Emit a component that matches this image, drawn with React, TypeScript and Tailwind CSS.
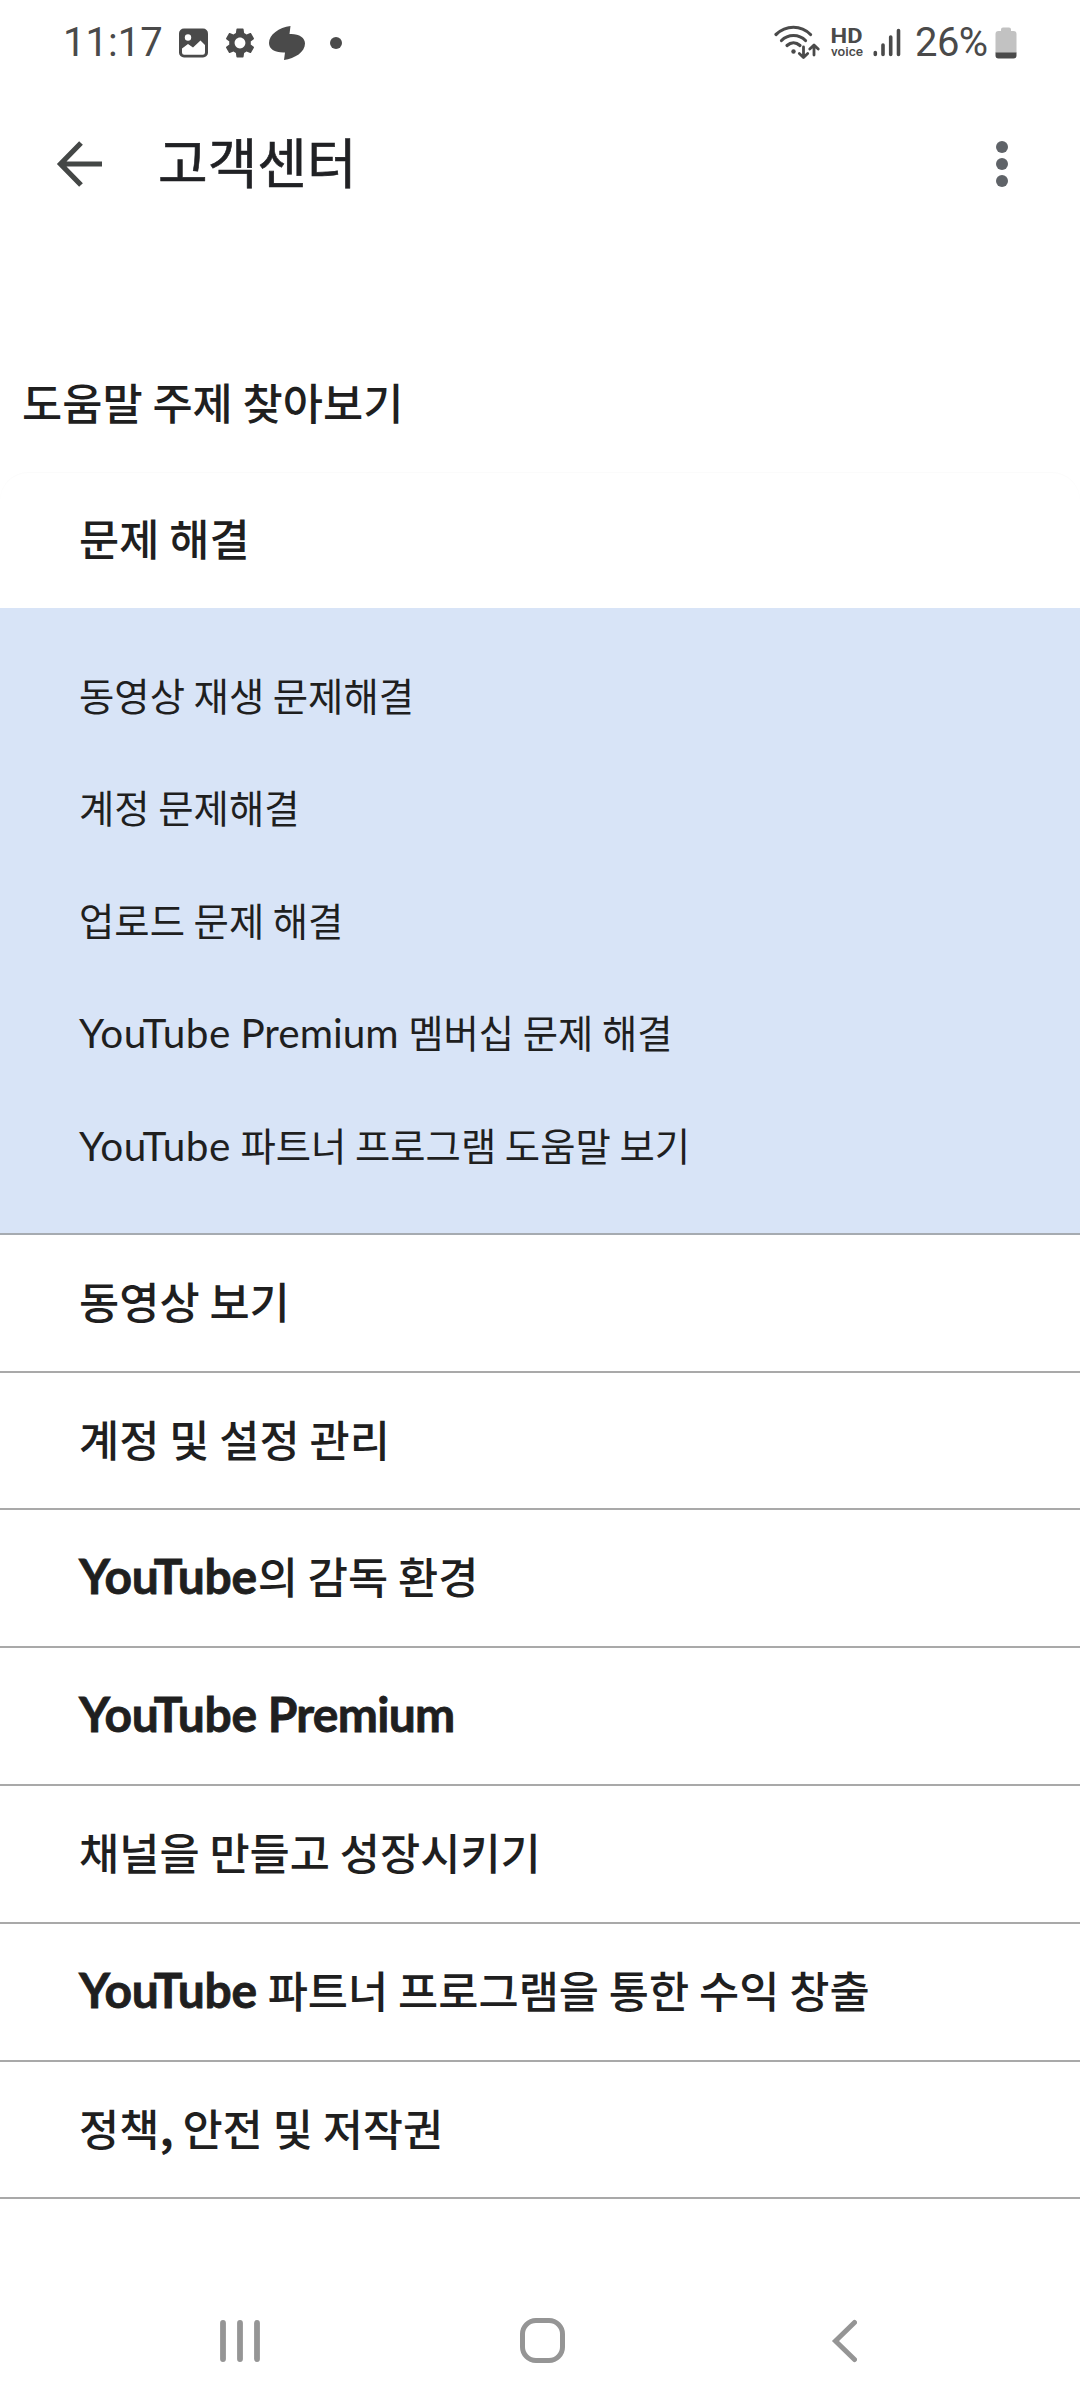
import type { ReactNode } from 'react';

const troubleshooting: ReactNode[] = [
  '동영상 재생 문제해결',
  '계정 문제해결',
  '업로드 문제 해결',
  <><YouTube /> <Latin>Premium</Latin> 멤버십 문제 해결</>,
  <><YouTube /> 파트너 프로그램 도움말 보기</>,
];

const topics: { label: ReactNode; height: string }[] = [
  { label: '동영상 보기', height: 'h-[138px]' },
  { label: '계정 및 설정 관리', height: 'h-[137px]' },
  { label: <><YouTubeBold />의 감독 환경</>, height: 'h-[138px]' },
  { label: <><YouTubeBold /> <LatinBold>Premium</LatinBold></>, height: 'h-[138px]' },
  { label: '채널을 만들고 성장시키기', height: 'h-[138px]' },
  { label: <><YouTubeBold /> 파트너 프로그램을 통한 수익 창출</>, height: 'h-[138px]' },
  { label: <>정책<b className="-mr-[1px] font-bold">,</b> 안전 및 저작권</>, height: 'h-[137px]' },
];

function Latin({ children }: { children: ReactNode }) {
  return (
    <span className="mr-[1px] font-['Lato',sans-serif] text-[40.5px] leading-[0px]">{children}</span>
  );
}

function YouTube() {
  return <span className="mr-[1px] font-['Lato',sans-serif] text-[40.5px] leading-[0px] tracking-[0.5px]">YouTube</span>;
}

function LatinBold({ children }: { children: ReactNode }) {
  return (
    <span className="font-['Lato',sans-serif] text-[48px] leading-[0px] font-bold tracking-[-0.7px] [-webkit-text-stroke:0.8px_#1f1f1f]">
      {children}
    </span>
  );
}

function YouTubeBold() {
  return (
    <span className="mr-[1px] font-['Lato',sans-serif] text-[48px] leading-[0px] font-bold tracking-[-0.3px] [-webkit-text-stroke:0.8px_#1f1f1f]">
      YouTube
    </span>
  );
}

function StatusBar() {
  return (
    <header className="flex h-[84px] items-center justify-between pr-[63px] pl-[63px] text-[#4a4a4a]">
      <div className="flex items-center">
        <span className="mt-[1px] w-[116px] font-['Roboto',sans-serif] text-[40px] leading-[84px]">11:17</span>
        <svg width="30" height="30" viewBox="0 0 30 30" className="mt-[2px]">
          <rect width="29" height="29" x="0" y="0.5" rx="5" fill="currentColor" />
          <circle cx="9" cy="9.5" r="3.2" fill="#fff" />
          <path d="M3 20.5 9 16l5 3.500L21.500 12.500 26 17v7.500a2.200 2.200 0 0 1-2.200 2.200H5.200A2.200 2.200 0 0 1 3 24.500Z" fill="#fff" />
        </svg>
        <svg width="36" height="36" viewBox="0 0 24 24" className="mt-[2px] ml-[13px]">
          <path
            fill="currentColor"
            d="M19.140 12.940c.04-.3.060-.61.060-.94 0-.32-.02-.64-.07-.94l2.030-1.580c.18-.14.23-.41.120-.61l-1.920-3.320c-.12-.22-.37-.29-.59-.22l-2.390.96c-.5-.38-1.030-.7-1.620-.94l-.36-2.540c-.04-.24-.24-.41-.48-.41h-3.840c-.24 0-.43.17-.47.41l-.36 2.540c-.59.24-1.130.57-1.620.94l-2.390-.96c-.22-.08-.47 0-.59.22L2.740 8.870c-.12.21-.08.47.120.61l2.030 1.580c-.05.3-.09.63-.09.94s.02.64.070.94l-2.030 1.580c-.18.14-.23.41-.12.61l1.920 3.320c.12.22.37.29.59.22l2.390-.96c.5.38 1.030.7 1.620.94l.36 2.540c.05.24.24.41.48.41h3.840c.24 0 .44-.17.47-.41l.36-2.540c.59-.24 1.130-.56 1.620-.94l2.390.96c.22.08.47 0 .59-.22l1.920-3.320c.12-.22.070-.47-.12-.61l-2.010-1.580zM12 15.600c-1.980 0-3.600-1.620-3.600-3.600s1.620-3.600 3.600-3.600 3.600 1.620 3.600 3.600-1.620 3.600-3.600 3.600z"
          />
        </svg>
        <svg width="38" height="36" viewBox="0 0 38 36" className="mt-[2px] ml-[10px]">
          <path
            fill="currentColor"
            d="M22.500 1 21.500 9C31 8.500 37 12.500 37 18.500 37 27 27 33.500 16 35L17 27.500C7 28 1 24 1 18 1 9.500 11 2.500 22.500 1Z"
          />
        </svg>
        <span className="mt-[2px] ml-[24px] size-[12px] rounded-full bg-[#4a4a4a]" />
      </div>

      <div className="flex items-center">
        <svg width="46" height="36" viewBox="0 0 46 36" fill="none" stroke="currentColor" strokeLinecap="round" className="mt-[1px]">
          <g strokeWidth="3.200">
            <path d="M2 9.500C12 -0.200 27 -0.200 36.500 9.500" />
            <path d="M7.500 15.500C14 8.800 25 8.800 31.500 15.500" />
            <path d="M13 20.500C17 16.800 22 16.800 26 20.500" />
          </g>
          <circle cx="19.500" cy="26.500" r="2.200" fill="currentColor" stroke="none" />
          <g strokeWidth="2.800" strokeLinejoin="round">
            <path d="M29.500 22V32.500M25.300 28.500 29.500 32.500 33.700 28.500" />
            <path d="M40 30V20.500M35.800 24 40 20 44.200 24" />
          </g>
        </svg>
        <span className="mt-[2px] ml-[10px] flex w-[34px] flex-col items-center">
          <b className="scale-x-[1.180] font-['Roboto',sans-serif] text-[20px] leading-[17px] font-bold">HD</b>
          <span className="font-['Roboto',sans-serif] text-[13.5px] leading-[13px] font-medium">voice</span>
        </span>
        <svg width="28" height="30" viewBox="0 0 28 30" stroke="currentColor" strokeWidth="3.600" strokeLinecap="round" className="mt-[1px] ml-[9px]">
          <path d="M2.300 24.500V26.500M10 17V26.500M17.700 9V26.500M25.500 2.500V26.500" />
        </svg>
        <span className="mt-[1px] ml-[14px] w-[77px] font-['Roboto',sans-serif] text-[40px] leading-[84px] tracking-[-0.6px]">26%</span>
        <svg width="22" height="32" viewBox="0 0 22 32" className="mt-[2px] ml-[3px]">
          <path d="M6 4V2.500A2 2 0 0 1 8 .5h6a2 2 0 0 1 2 2V4h2.500A3 3 0 0 1 21.500 7V26H.5V7a3 3 0 0 1 3-3Z" fill="#c2c2c2" />
          <path d="M.5 25.500h21V28.500a3 3 0 0 1-3 3h-15a3 3 0 0 1-3-3Z" fill="currentColor" />
        </svg>
      </div>
    </header>
  );
}

function AppBar() {
  return (
    <div className="flex h-[160px] items-center pl-[56px]">
      <svg width="48" height="48" viewBox="0 0 48 48" fill="none" stroke="#444746" strokeWidth="5.200">
        <path d="M25 3 4.500 24 25 45M5 24H46" />
      </svg>
      <h1 className="ml-[54px] flex-1 pb-[6px] text-[54px] leading-[154px] font-normal text-[#202124] [-webkit-text-stroke:0.6px_#202124]">
        고객센터
      </h1>
      <button aria-label="더보기" className="mr-[72px] flex flex-col gap-[5px]">
        <span className="size-[12px] rounded-full bg-[#5f6368]" />
        <span className="size-[12px] rounded-full bg-[#5f6368]" />
        <span className="size-[12px] rounded-full bg-[#5f6368]" />
      </button>
    </div>
  );
}

function NavBar() {
  return (
    <nav className="flex h-[135px] items-center pl-[220px]">
      <svg width="40" height="44" viewBox="0 0 40 44" stroke="#959595" strokeWidth="5.800" strokeLinecap="round">
        <path d="M3 4V40M20 4V40M37 4V40" />
      </svg>
      <span className="ml-[260px] size-[45px] rounded-[16px] border-[5.500px] border-[#959595]" />
      <svg width="26" height="46" viewBox="0 0 26 46" fill="none" stroke="#959595" strokeWidth="5" strokeLinecap="round" className="ml-[266px]">
        <path d="M23.500 4.500 4.500 23 23.500 41.500" />
      </svg>
    </nav>
  );
}

export default function App() {
  return (
    <div className="flex h-[2408px] w-[1080px] flex-col overflow-hidden bg-white font-['Noto_Sans_CJK_KR',sans-serif] text-[#1f1f1f]">
      <StatusBar />
      <AppBar />
      <main className="flex flex-1 flex-col pt-[92px]">
        <h2 className="h-[136px] pl-[22px] text-[43.7px] leading-[131px] font-medium">도움말 주제 찾아보기</h2>
        <section className="rounded-t-[28px] shadow-[inset_0_1px_1px_#fbfbfb]">
          <h3 className="h-[136px] pl-[79px] text-[43.7px] leading-[131px] font-medium">문제 해결</h3>
          <ul className="h-[627px] border-b-2 border-[#a6abb1] bg-[#d8e4f7] pt-[29.5px] pl-[79px] text-[38.4px] leading-[112.5px] text-[#1f1f1f]">
            {troubleshooting.map((label, i) => (
              <li key={i} className="h-[112.5px] whitespace-nowrap">{label}</li>
            ))}
          </ul>
          <ul className="text-[43.7px] leading-[131px] font-medium">
            {topics.map(({ label, height }, i) => (
              <li key={i} className={`${height} border-b-2 border-[#a9a9a9] pl-[79px] whitespace-nowrap`}>{label}</li>
            ))}
          </ul>
        </section>
      </main>
      <NavBar />
    </div>
  );
}
